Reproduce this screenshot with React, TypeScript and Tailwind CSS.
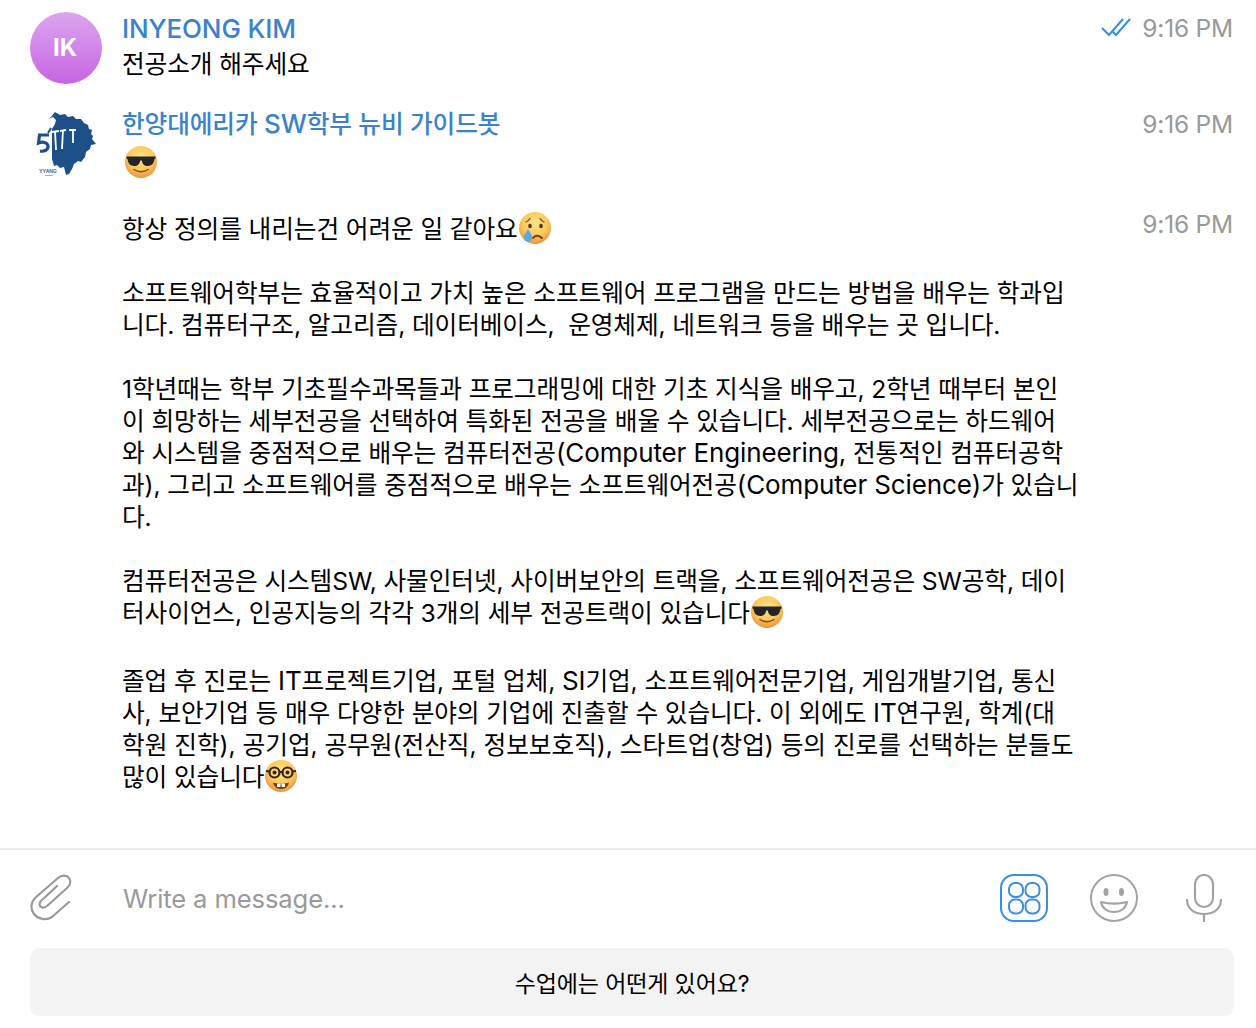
import React from "react";

const FONT = "font-['Inter','Noto_Sans_CJK_KR',sans-serif]";

type EmojiKind = "cool" | "cry" | "nerd";

// Apple-ish emoji faces, drawn since no image files are available
const Emoji = ({ kind, className }: { kind: EmojiKind; className?: string }) => {
  const id = `face-${kind}`;
  return (
    <svg viewBox="0 0 34 34" className={className}>
      <defs>
        <radialGradient id={id} cx="50%" cy="36%" r="64%">
          <stop offset="0%" stopColor="#ffe58a" />
          <stop offset="60%" stopColor="#fbc85a" />
          <stop offset="100%" stopColor="#ea9440" />
        </radialGradient>
      </defs>
      <circle cx="17" cy="17" r="16" fill={`url(#${id})`} />
      {kind === "cool" && (
        <>
          <path d="M2.500 11.500h29v2l-1 .6c-.6 4.600-3 6.900-6.700 6.900-3.600 0-5.600-2.400-6-5.600h-1.600c-.4 3.200-2.400 5.600-6 5.600-3.700 0-6.100-2.300-6.700-6.900l-1-.6z" fill="#23252b" />
          <path d="M10 24.500c4 3 10 3 14 0" fill="none" stroke="#8a4a16" strokeWidth="1.500" strokeLinecap="round" />
        </>
      )}
      {kind === "cry" && (
        <>
          <path d="M8 11c1.500-.5 3-1.800 4-3.500M26 11c-1.500-.5-3-1.800-4-3.500" fill="none" stroke="#8a4a16" strokeWidth="1.300" strokeLinecap="round" />
          <ellipse cx="12" cy="15" rx="1.800" ry="2.300" fill="#5b3212" />
          <ellipse cx="23" cy="15" rx="1.800" ry="2.300" fill="#5b3212" />
          <path d="M15 27c2-3 6-3 9 0" fill="none" stroke="#6e3a14" strokeWidth="1.800" strokeLinecap="round" />
          <path d="M10 18c2 3.500 4 5.500 4 8.500a4 4 0 0 1-8 0c0-3 2-5 4-8.500z" fill="#5aa9e6" />
        </>
      )}
      {kind === "nerd" && (
        <>
          <path d="M9 23.500c3 1.500 13 1.500 16 0-1 4.500-4 6.500-8 6.500s-7-2-8-6.500z" fill="#7a3d14" />
          <rect x="13" y="24.500" width="3.500" height="3.500" rx=".8" fill="#fff" />
          <rect x="17.500" y="24.500" width="3.500" height="3.500" rx=".8" fill="#fff" />
          <circle cx="10.500" cy="13.500" r="5" fill="#fbd57a" stroke="#33251a" strokeWidth="2.200" />
          <circle cx="23.500" cy="13.500" r="5" fill="#fbd57a" stroke="#33251a" strokeWidth="2.200" />
          <path d="M15.500 13h3M2 12l3.500.5M32 12l-3.500.5" stroke="#33251a" strokeWidth="2" />
          <circle cx="10.500" cy="13.500" r="2" fill="#3b2412" />
          <circle cx="23.500" cy="13.500" r="2" fill="#3b2412" />
        </>
      )}
    </svg>
  );
};

const InlineEmoji = ({ kind }: { kind: EmojiKind }) => (
  <Emoji kind={kind} className="inline-block w-[34px] h-[34px] -my-2 align-middle -translate-y-[3px]" />
);

// University lion crest
const LionLogo = () => (
  <svg viewBox="0 0 72 72" className="w-[72px] h-[72px] shrink-0">
    <path
      d="M18 11l3-2 4-5 5 3 5-1 3 3 5-1 3 3 5 0 3 4 4 2 1 4 3 1-1 4 2 2-1 3 4 5-5 1-1 4-4 3-1 5-4 5-3-1-4 3-2 5-3 5-3 1-2-8-4 1-3-3-3 1-2-7 0-30 3-5 1-4-3-3z"
      fill="#1d4f88"
    />
    <path d="M21 20l-3 5" fill="none" stroke="#1d4f88" strokeWidth="2" />
    <path d="M19 27H9.500l-1 8c4-1.500 9-1 9.500 3 .4 3.500-3 6-8 5" fill="none" stroke="#1d4f88" strokeWidth="3.200" />
    <path d="M25 23l1 19M33 22l-1 19M43 21v14M22 24l7-1M30 23l6-1M39 22l7 0" fill="none" stroke="#fff" strokeWidth="1.800" />
    <text x="9" y="65" fontSize="5" fontWeight="700" fill="#5d728c">YYANG</text>
    <rect x="15" y="67" width="8" height="1" fill="#aab4c2" />
  </svg>
);

const Time = ({ check }: { check?: boolean }) => (
  <div className="ml-auto flex items-center gap-[11px] h-6 mt-1 text-[24.500px] tracking-[-0.2px] text-[#999999] whitespace-nowrap shrink-0">
    {check && (
      <svg viewBox="0 0 30 20" className="w-[30px] h-5 text-[#3b8fe0] -mt-[2px]" fill="none" stroke="currentColor" strokeWidth="2.200">
        <path d="M1 11l7 7L22 2M12 15l3 3L29 2" />
      </svg>
    )}
    9:16 PM
  </div>
);

const Line = ({ children, className }: { children?: React.ReactNode; className?: string }) => (
  <div className={`h-8 leading-8 whitespace-pre ${className ?? ""}`}>{children}</div>
);

// Latin runs sit a little larger than the Korean around them
const Lat = ({ children }: { children: React.ReactNode }) => <span className="text-[26px]">{children}</span>;

const App = () => {
  return (
    <div className={`h-[1028px] w-[1256px] overflow-hidden bg-white flex flex-col text-[24.700px] tracking-[-0.12px] text-black ${FONT}`}>
      <div className="h-[848px] pr-[23px] pt-3 pl-[30px]">
        <div className="flex">
          <div className="w-[72px] h-[72px] rounded-full shrink-0 flex items-center justify-center pr-[2px] bg-gradient-to-b from-[#dba5ee] to-[#c763e3] text-white text-2xl font-bold">
            IK
          </div>
          <div className="ml-5 pt-px">
            <Line className="text-[#3a82c9] font-medium"><Lat>INYEONG KIM</Lat></Line>
            <Line className="mt-[3px]">전공소개 해주세요</Line>
          </div>
          <Time check />
        </div>

        <div className="flex mt-6">
          <LionLogo />
          <div className="ml-5">
            <Line className="text-[#3a82c9] font-medium">한양대에리카 <Lat>SW</Lat>학부 뉴비 가이드봇</Line>
            <Line className="mt-[5px] pl-[2px]">
              <Emoji kind="cool" className="w-[34px] h-[34px]" />
            </Line>
          </div>
          <Time />
        </div>

        <div className="flex mt-7">
          <div className="w-[72px] shrink-0" />
          <div className="ml-5 pt-[5px]">
            <Line>
              항상 정의를 내리는건 어려운 일 같아요
              <InlineEmoji kind="cry" />
            </Line>
            <Line />
            <Line>소프트웨어학부는 효율적이고 가치 높은 소프트웨어 프로그램을 만드는 방법을 배우는 학과입</Line>
            <Line>니다. 컴퓨터구조, 알고리즘, 데이터베이스,  운영체제, 네트워크 등을 배우는 곳 입니다.</Line>
            <Line />
            <Line>1학년때는 학부 기초필수과목들과 프로그래밍에 대한 기초 지식을 배우고, 2학년 때부터 본인</Line>
            <Line>이 희망하는 세부전공을 선택하여 특화된 전공을 배울 수 있습니다. 세부전공으로는 하드웨어</Line>
            <Line>와 시스템을 중점적으로 배우는 컴퓨터전공<Lat>(Computer Engineering,</Lat> 전통적인 컴퓨터공학</Line>
            <Line>과), 그리고 소프트웨어를 중점적으로 배우는 소프트웨어전공<Lat>(Computer Science)</Lat>가 있습니</Line>
            <Line>다.</Line>
            <Line />
            <Line>컴퓨터전공은 시스템SW, 사물인터넷, 사이버보안의 트랙을, 소프트웨어전공은 SW공학, 데이</Line>
            <Line>
              터사이언스, 인공지능의 각각 3개의 세부 전공트랙이 있습니다
              <InlineEmoji kind="cool" />
            </Line>
            <Line />
            <Line className="mt-1">졸업 후 진로는 <Lat>IT</Lat>프로젝트기업, 포털 업체, <Lat>SI</Lat>기업, 소프트웨어전문기업, 게임개발기업, 통신</Line>
            <Line>사, 보안기업 등 매우 다양한 분야의 기업에 진출할 수 있습니다. 이 외에도 <Lat>IT</Lat>연구원, 학계(대</Line>
            <Line className="tracking-[-0.04px]">학원 진학), 공기업, 공무원(전산직, 정보보호직), 스타트업(창업) 등의 진로를 선택하는 분들도</Line>
            <Line>
              많이 있습니다
              <InlineEmoji kind="nerd" />
            </Line>
          </div>
          <Time />
        </div>
      </div>

      <div className="border-t-2 border-[#ebebeb] flex items-center h-[100px] pl-[30px] pr-[34px] shrink-0">
        <svg viewBox="0 0 42 48" className="w-[42px] h-[48px] text-[#999999] -mt-1" fill="none" stroke="currentColor" strokeWidth="2.200" strokeLinecap="round">
          <path d="M39 29L22 44c-6 4-14 2-18-3s-3-12 1-16L28 5c4-3.500 9-3 11 0s1.500 7-2 10L17 33c-2.500 2-5 2-6.500.5s-1.200-4 1-6L27 13" />
        </svg>
        <div className="ml-[51px] text-[25.600px] text-[#999999]">Write a message...</div>
        <div className="ml-auto flex items-center -mt-[2px]">
          <svg viewBox="0 0 48 48" className="w-12 h-12 text-[#3b8fe0]" fill="none" stroke="currentColor" strokeWidth="2">
            <rect x="1" y="1" width="46" height="46" rx="13" />
            <rect x="9" y="9" width="14" height="14" rx="6" />
            <rect x="25.500" y="9" width="14" height="14" rx="6" />
            <rect x="9" y="25.500" width="14" height="14" rx="6" />
            <rect x="25.500" y="25.500" width="14" height="14" rx="6" />
          </svg>
          <svg viewBox="0 0 48 48" className="w-12 h-12 ml-[42px] text-[#a3a3a3]" fill="none" stroke="currentColor" strokeWidth="2">
            <circle cx="24" cy="24" r="23" />
            <ellipse cx="16" cy="18" rx="2.500" ry="4" fill="currentColor" stroke="none" />
            <ellipse cx="31.500" cy="18" rx="2.500" ry="4" fill="currentColor" stroke="none" />
            <path d="M11 28c8 2 18 2 26 0-1 6-6 10-13 10s-12-4-13-10z" strokeLinejoin="round" />
          </svg>
          <svg viewBox="0 0 36 48" className="w-9 h-12 ml-[48px] text-[#a3a3a3]" fill="none" stroke="currentColor" strokeWidth="2.200">
            <rect x="9" y="1" width="18" height="32" rx="9" />
            <path d="M1 25c0 10 7 15 17 15s17-5 17-15M18 40v8" />
          </svg>
        </div>
      </div>

      <div className="mr-[22px] ml-[30px] h-[68px] rounded-[10px] bg-[#f3f3f3] flex items-center justify-center pt-1 text-[23px]">
        수업에는 어떤게 있어요?
      </div>
    </div>
  );
};

export default App;
